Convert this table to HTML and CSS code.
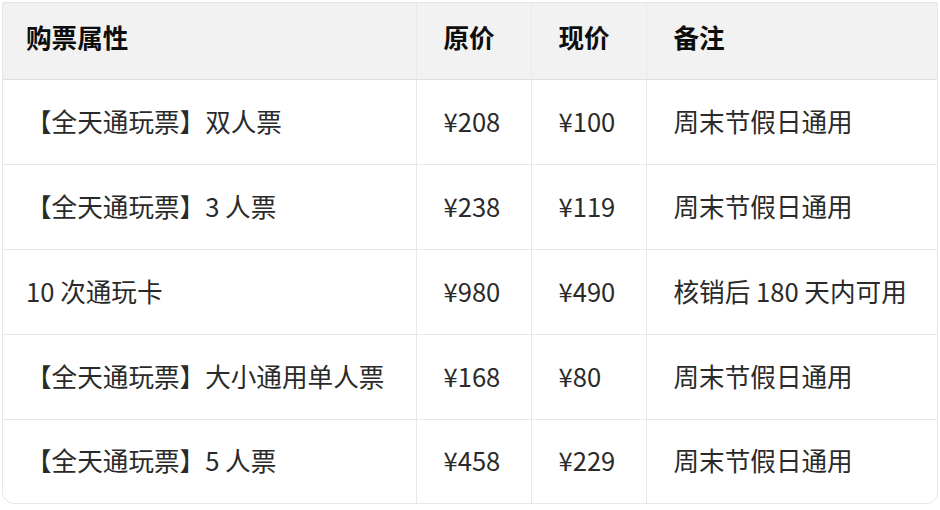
FILE: index.html
```html
<!DOCTYPE html>
<html lang="zh-CN">
<head>
<meta charset="utf-8">
<link rel="stylesheet" href="styles.css">
</head>
<body>
<div class="wrap">
  <table class="price-table">
    <colgroup>
      <col class="c-name">
      <col class="c-price">
      <col class="c-price">
      <col class="c-note">
    </colgroup>
    <thead>
      <tr><th>购票属性</th><th>原价</th><th>现价</th><th>备注</th></tr>
    </thead>
    <tbody>
      <tr><td>【全天通玩票】双人票</td><td>¥208</td><td>¥100</td><td>周末节假日通用</td></tr>
      <tr><td>【全天通玩票】3 人票</td><td>¥238</td><td>¥119</td><td>周末节假日通用</td></tr>
      <tr><td>10 次通玩卡</td><td>¥980</td><td>¥490</td><td>核销后 180 天内可用</td></tr>
      <tr><td>【全天通玩票】大小通用单人票</td><td>¥168</td><td>¥80</td><td>周末节假日通用</td></tr>
      <tr><td>【全天通玩票】5 人票</td><td>¥458</td><td>¥229</td><td>周末节假日通用</td></tr>
    </tbody>
  </table>
</div>
</body>
</html>
```
FILE: styles.css
```css
html, body {
  margin: 0;
  padding: 0;
  background: #ffffff;
}
body {
  font-family: "Noto Sans CJK SC", "Noto Sans", sans-serif;
  padding: 2px 2px 0 2px;
}
.wrap {
  width: 936px;
  border: 1px solid #e6e6e6;
  border-radius: 0 0 12px 12px;
  overflow: hidden;
  box-sizing: border-box;
}
.price-table {
  width: 100%;
  border-collapse: collapse;
  table-layout: fixed;
  font-size: 25.6px;
  color: #2a2a2a;
}
.c-name { width: 413px; }
.c-price { width: 115px; }
.c-note { width: auto; }
.price-table th,
.price-table td {
  box-sizing: border-box;
  text-align: left;
  padding: 0 0 0 27px;
  border-left: 1px solid #e8e8e8;
  border-top: 1px solid #e8e8e8;
  white-space: nowrap;
  font-weight: 400;
}
.price-table th:first-child,
.price-table td:first-child {
  border-left: none;
  padding-left: 23px;
}
.price-table thead th {
  background: #f2f2f2;
  font-weight: 700;
  color: #0d0d0d;
  height: 76px;
  padding-bottom: 9px;
  border-top: none;
  border-bottom: 1px solid #e0e0e0;
}
.price-table tbody td {
  height: 85px;
  padding-bottom: 3px;
}
.price-table tbody tr:first-child td {
  border-top: none;
}
.price-table tbody tr:last-child td {
  height: 84px;
}
```
